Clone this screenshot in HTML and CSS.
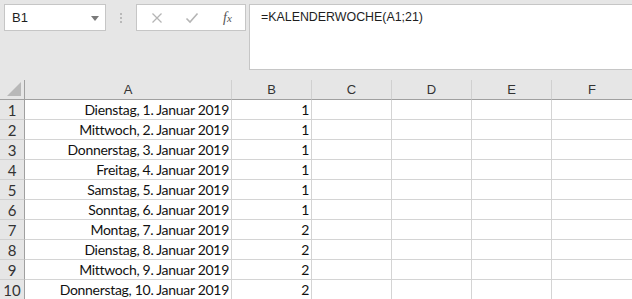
FILE: index.html
```html
<!DOCTYPE html>
<html lang="de">
<head>
    <meta charset="UTF-8">
    <title>KALENDERWOCHE</title>
    <link rel="stylesheet" href="styles.css">
</head>
<body>
    <div class="toolbar">
        <div class="name-box">
            <span>B1</span>
            <svg class="drop" width="8" height="5" viewBox="0 0 8 5"><path d="M0 0h8L4 5z" fill="#7a7a7a"/></svg>
        </div>
        <div class="grip">
            <i></i><i></i><i></i>
        </div>
        <div class="buttons">
            <svg width="12" height="12" viewBox="0 0 12 12"><path d="M1.5 1.5l9 9M10.5 1.5l-9 9" stroke="#b5b5b5" stroke-width="1.3"/></svg>
            <svg width="14" height="12" viewBox="0 0 14 12"><path d="M1.5 6.5l3.5 3.5L12.5 1.5" stroke="#b5b5b5" stroke-width="1.6" fill="none"/></svg>
            <span class="fx">f<sub>x</sub></span>
        </div>
        <div class="formula">=KALENDERWOCHE(A1;21)</div>
    </div>

    <div class="sheet" id="sheet">
        <div class="hd corner">
            <svg width="14" height="14" viewBox="0 0 14 14"><path d="M14 0V14H0z" fill="#b8b8b8"/></svg>
        </div>
        <div class="hd col">A</div>
        <div class="hd col">B</div>
        <div class="hd col">C</div>
        <div class="hd col">D</div>
        <div class="hd col">E</div>
        <div class="hd col last">F</div>
    </div>

    <script>
        const days = [
            ['Dienstag, 1. Januar 2019', 1],
            ['Mittwoch, 2. Januar 2019', 1],
            ['Donnerstag, 3. Januar 2019', 1],
            ['Freitag, 4. Januar 2019', 1],
            ['Samstag, 5. Januar 2019', 1],
            ['Sonntag, 6. Januar 2019', 1],
            ['Montag, 7. Januar 2019', 2],
            ['Dienstag, 8. Januar 2019', 2],
            ['Mittwoch, 9. Januar 2019', 2],
            ['Donnerstag, 10. Januar 2019', 2]
        ];
        const sheet = document.getElementById('sheet');
        days.forEach(([text, week], i) => {
            sheet.innerHTML += `<div class="hd row">${i + 1}</div>`
                + `<div class="cell num">${text}</div>`
                + `<div class="cell num">${week}</div>`
                + '<div class="cell"></div><div class="cell"></div><div class="cell"></div><div class="cell last"></div>';
        });
    </script>
</body>
</html>
```

FILE: styles.css
```css
body {
    margin: 0;
    background: #e6e6e6;
    font-family: 'Liberation Sans', Arial, sans-serif;
    color: #1e1e1e;
    overflow: hidden;
}

.toolbar {
    display: flex;
    align-items: flex-start;
    height: 80px;
    padding: 4px 0 0 4px;
    box-sizing: border-box;
}

.name-box {
    width: 102px;
    height: 27px;
    box-sizing: border-box;
    border: 1px solid #c6c6c6;
    background: #fff;
    display: flex;
    align-items: center;
    justify-content: space-between;
    padding: 0 6px 0 7px;
    font-size: 13px;
}

.name-box .drop {
    margin-top: 1px;
}

.grip {
    width: 30px;
    height: 27px;
    display: flex;
    flex-direction: column;
    align-items: center;
    justify-content: center;
    gap: 2px;
}

.grip i {
    width: 2px;
    height: 2px;
    background: #b9b9b9;
}

.buttons {
    width: 110px;
    height: 27px;
    box-sizing: border-box;
    border: 1px solid #c6c6c6;
    background: #fff;
    display: flex;
    align-items: center;
    padding: 0 0 0 14px;
    gap: 22px;
}

.fx {
    font-family: 'Liberation Serif', serif;
    font-style: italic;
    font-size: 14px;
    color: #555;
    margin-left: 2px;
}

.fx sub {
    font-size: 11px;
    vertical-align: 0;
}

.formula {
    flex: 1;
    margin-left: 3px;
    height: 66px;
    box-sizing: border-box;
    border: 1px solid #c6c6c6;
    border-right: none;
    background: #fff;
    padding: 5px 0 0 11px;
    font-size: 12.4px;
}

.sheet {
    display: grid;
    grid-template-columns: 25px 207px repeat(5, 80px);
    grid-auto-rows: 20px;
}

.hd {
    box-sizing: border-box;
    background: #e6e6e6;
    border-right: 1px solid #d0d0d0;
    border-bottom: 1px solid #d0d0d0;
    display: flex;
    align-items: center;
    justify-content: center;
    font-size: 13px;
    color: #333;
}

.corner,
.col {
    border-bottom-color: #a0a0a0;
}

.corner,
.row {
    border-right-color: #a0a0a0;
}

.corner {
    justify-content: flex-end;
    align-items: flex-end;
    padding: 0 3px 3px 0;
}

.row {
    font-family: 'Lato', sans-serif;
    font-size: 15px;
    padding-top: 1px;
}

.cell {
    box-sizing: border-box;
    background: #fff;
    border-right: 1px solid #d4d4d4;
    border-bottom: 1px solid #d4d4d4;
    font-family: 'Lato', 'Liberation Sans', sans-serif;
    font-size: 14px;
    letter-spacing: -0.3px;
    line-height: 19px;
    padding: 0 2px;
    white-space: nowrap;
    color: #111;
}

.num {
    text-align: right;
}

.last {
    border-right: none;
}
```
